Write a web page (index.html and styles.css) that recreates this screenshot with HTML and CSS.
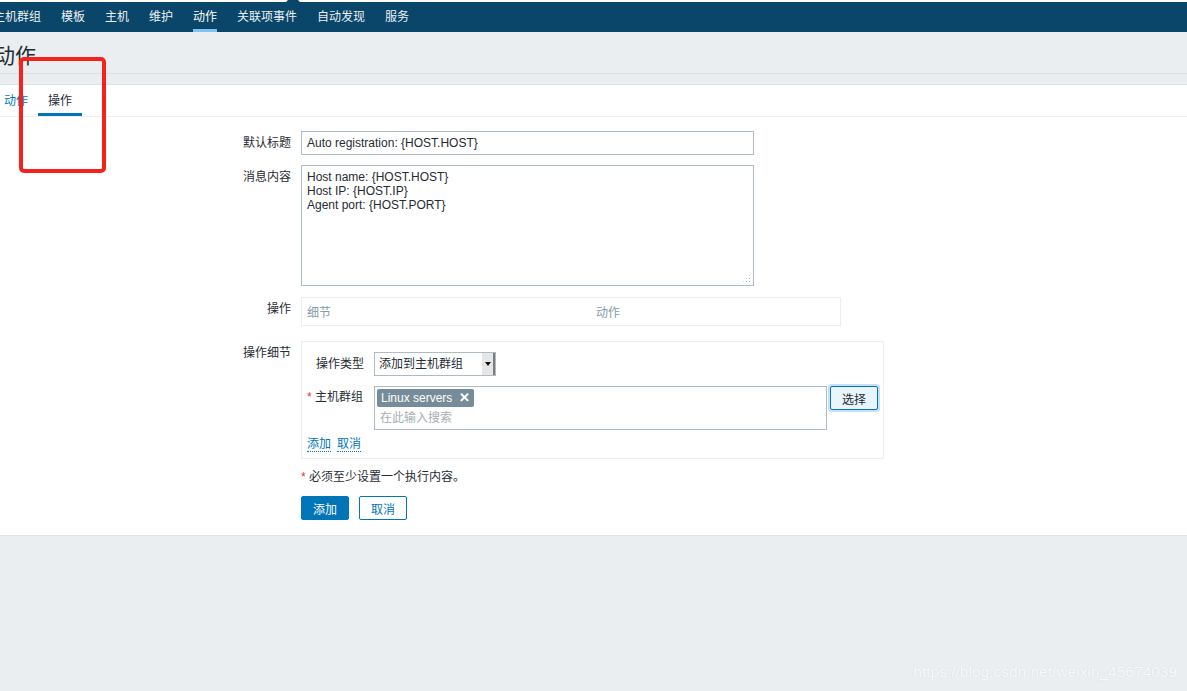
FILE: index.html
```html
<!DOCTYPE html>
<html lang="zh-CN">
<head>
<meta charset="utf-8">
<title>动作</title>
<link rel="stylesheet" href="styles.css">
</head>
<body>
<div class="topstrip"><span class="notch"></span></div>
<nav class="topnav">
  <ul class="menu">
    <li><a>主机群组</a></li>
    <li><a>模板</a></li>
    <li><a>主机</a></li>
    <li><a>维护</a></li>
    <li class="selected"><a>动作</a></li>
    <li><a>关联项事件</a></li>
    <li><a>自动发现</a></li>
    <li><a>服务</a></li>
  </ul>
</nav>
<header class="page-header">
  <h1>动作</h1>
</header>
<main class="panel">
  <ul class="tabs">
    <li><a class="tab-link">动作</a></li>
    <li class="active"><a>操作</a></li>
  </ul>
  <form class="form">
    <div class="row r1">
      <label class="label">默认标题</label>
      <div class="input">Auto registration: {HOST.HOST}</div>
    </div>
    <div class="row r2">
      <label class="label">消息内容</label>
      <div class="textarea">Host name: {HOST.HOST}<br>Host IP: {HOST.IP}<br>Agent port: {HOST.PORT}<span class="grip"></span></div>
    </div>
    <div class="row r3">
      <label class="label">操作</label>
      <div class="optable">
        <span class="th th1">细节</span>
        <span class="th">动作</span>
      </div>
    </div>
    <div class="row r4">
      <label class="label">操作细节</label>
      <div class="details">
        <div class="irow">
          <label class="ilabel">操作类型</label>
          <div class="select"><span class="sel-text">添加到主机群组</span><span class="sel-arrow"><i></i></span></div>
        </div>
        <div class="irow irow2">
          <label class="ilabel"><span class="req">*</span> 主机群组</label>
          <div class="multiselect">
            <span class="chip">Linux servers <b>✕</b></span>
            <span class="placeholder">在此输入搜索</span>
          </div>
          <button type="button" class="btn-select">选择</button>
        </div>
        <div class="links">
          <a class="dlink">添加</a>
          <a class="dlink">取消</a>
        </div>
      </div>
    </div>
    <div class="row r5">
      <span class="label"></span>
      <div class="note"><span class="req">*</span> 必须至少设置一个执行内容。</div>
    </div>
    <div class="row r6">
      <span class="label"></span>
      <div class="buttons">
        <button type="button" class="btn primary">添加</button>
        <button type="button" class="btn alt">取消</button>
      </div>
    </div>
  </form>
</main>
<div class="redbox"></div>
<div class="watermark">https://blog.csdn.net/weixin_45674039</div>
</body>
</html>
```
FILE: styles.css
```css
* { box-sizing: border-box; }
html, body { margin: 0; padding: 0; }
body {
  background: #ebeef0;
  font-family: "Liberation Sans", Arial, "Noto Sans CJK SC", sans-serif;
  font-size: 12px;
  color: #1f2c33;
  height: 691px;
  overflow: hidden;
  position: relative;
}
.topstrip {
  height: 2px;
  background: #ffffff;
  position: relative;
}
.notch {
  position: absolute;
  left: 286px;
  top: -5px;
  width: 0;
  height: 0;
  border-left: 7px solid transparent;
  border-right: 7px solid transparent;
  border-bottom: 7px solid #0a466a;
}
.topnav {
  height: 30px;
  background: #0a466a;
}
.menu {
  list-style: none;
  margin: 0 0 0 -17px;
  padding: 0;
  display: flex;
  height: 30px;
}
.menu li a {
  display: block;
  padding: 1px 10px 0;
  line-height: 29px;
  color: #ffffff;
  opacity: 0.92;
  height: 30px;
  position: relative;
}
.menu li.selected a { opacity: 1; }
.menu li.selected a::after {
  content: "";
  position: absolute;
  left: 10px;
  right: 10px;
  bottom: 0;
  height: 3px;
  background: #7fc3f0;
}
.page-header {
  height: 42px;
  border-bottom: 1px solid #dcdfe2;
  padding: 12px 0 0 0;
}
.page-header h1 {
  margin: 0 0 0 -6px;
  font-weight: normal;
  font-size: 21px;
  line-height: 24px;
  color: #1f2c33;
}
.panel {
  margin-top: 10px;
  background: #ffffff;
  border-top: 1px solid #dfe4e7;
  border-bottom: 1px solid #dfe4e7;
}
.tabs {
  list-style: none;
  margin: 0;
  padding: 0;
  display: flex;
  border-bottom: 1px solid #ebeef0;
  margin-left: -6px;
}
.tabs li a {
  display: block;
  padding: 9px 10px 5px;
  line-height: 14px;
  border-bottom: 3px solid transparent;
  color: #1f2c33;
}
.tabs li a.tab-link { color: #0275b8; }
.tabs li.active a { border-bottom-color: #0275b8; }
.form {
  padding: 14px 0 15px;
}
.row {
  display: flex;
  gap: 10px;
  align-items: flex-start;
}
.label {
  width: 291px;
  flex: none;
  text-align: right;
  padding-top: 5px;
  line-height: 14px;
}
.r1 { margin-bottom: 10px; }
.r2 { margin-bottom: 11px; }
.r3 { margin-bottom: 15px; }
.r4 { margin-bottom: 11px; }
.r5 { margin-bottom: 12px; }
.input {
  width: 453px;
  height: 24px;
  border: 1px solid #acbbc4;
  padding: 0 5px;
  line-height: 22px;
  color: #1f2c33;
}
.textarea {
  width: 453px;
  height: 121px;
  border: 1px solid #acbbc4;
  padding: 4px 5px;
  line-height: 14px;
  position: relative;
}
.grip {
  position: absolute;
  right: 2px;
  bottom: 2px;
  width: 9px;
  height: 9px;
  background:
    radial-gradient(circle, #a9b1b6 0.8px, transparent 1px) 0 0 / 3px 3px;
  clip-path: polygon(100% 0, 100% 100%, 0 100%);
}
.optable {
  width: 540px;
  height: 29px;
  border: 1px solid #ebeef0;
  display: flex;
  padding: 8px 5px 0;
  line-height: 14px;
}
.th { color: #869aa7; }
.th1 { width: 289px; }
.details {
  width: 583px;
  border: 1px solid #ebeef0;
  padding: 10px 5px 6px;
}
.irow {
  display: flex;
  gap: 10px;
  align-items: flex-start;
  margin-bottom: 10px;
}
.irow2 { gap: 0; margin-bottom: 7px; }
.irow2 .ilabel { margin-right: 10px; }
.ilabel {
  width: 57px;
  flex: none;
  text-align: right;
  padding-top: 5px;
  line-height: 14px;
  white-space: nowrap;
}
.irow2 .ilabel { text-align: left; padding-top: 4px; }
.req { color: #e33734; }
.select {
  width: 122px;
  height: 24px;
  border: 1px solid #acbbc4;
  display: flex;
  background: #ffffff;
}
.sel-text {
  flex: 1;
  padding-left: 4px;
  line-height: 22px;
}
.sel-arrow {
  width: 13px;
  height: 22px;
  background: #e6e6e6;
  border-right: 2px solid #7c7c7c;
  display: flex;
  align-items: center;
  justify-content: center;
}
.sel-arrow i {
  width: 0;
  height: 0;
  border-left: 3px solid transparent;
  border-right: 3px solid transparent;
  border-top: 4px solid #111111;
}
.multiselect {
  width: 453px;
  height: 44px;
  border: 1px solid #acbbc4;
  padding: 2px 2px;
  display: flex;
  flex-direction: column;
  align-items: flex-start;
}
.chip {
  background: #768d99;
  color: #ffffff;
  height: 18px;
  line-height: 18px;
  padding: 0 4px;
  border-radius: 2px;
  white-space: nowrap;
}
.chip b {
  font-size: 13px;
  margin-left: 3px;
  font-weight: bold;
}
.placeholder {
  color: #a6aeb3;
  margin: 4px 0 0 3px;
  line-height: 14px;
}
.btn-select {
  margin-left: 3px;
  width: 48px;
  height: 24px;
  border: 1px solid #0275b8;
  background: #e8f5ff;
  color: #1f2c33;
  font: inherit;
  border-radius: 2px;
  box-shadow: 0 0 0 2px #c4e1f5;
  padding: 0;
}
.links {
  display: flex;
  gap: 6px;
  line-height: 14px;
}
.dlink {
  color: #0275b8;
  border-bottom: 1px dotted #0275b8;
}
.note { line-height: 14px; }
.buttons { display: flex; gap: 10px; }
.btn {
  width: 48px;
  height: 24px;
  font: inherit;
  border-radius: 2px;
  padding: 0;
}
.btn.primary {
  background: #0275b8;
  border: 1px solid #0275b8;
  color: #ffffff;
}
.btn.alt {
  background: #ffffff;
  border: 1px solid #0275b8;
  color: #0275b8;
}
.redbox {
  position: absolute;
  left: 19px;
  top: 57px;
  width: 87px;
  height: 116px;
  border: 4px solid #f5221b;
  border-radius: 5px;
}
.watermark {
  position: absolute;
  right: 10px;
  top: 661px;
  font-size: 15.5px;
  line-height: 22px;
  color: rgba(255, 255, 255, 0.9);
  text-shadow: 0 0 1px rgba(160, 170, 180, 0.45);
}
```
